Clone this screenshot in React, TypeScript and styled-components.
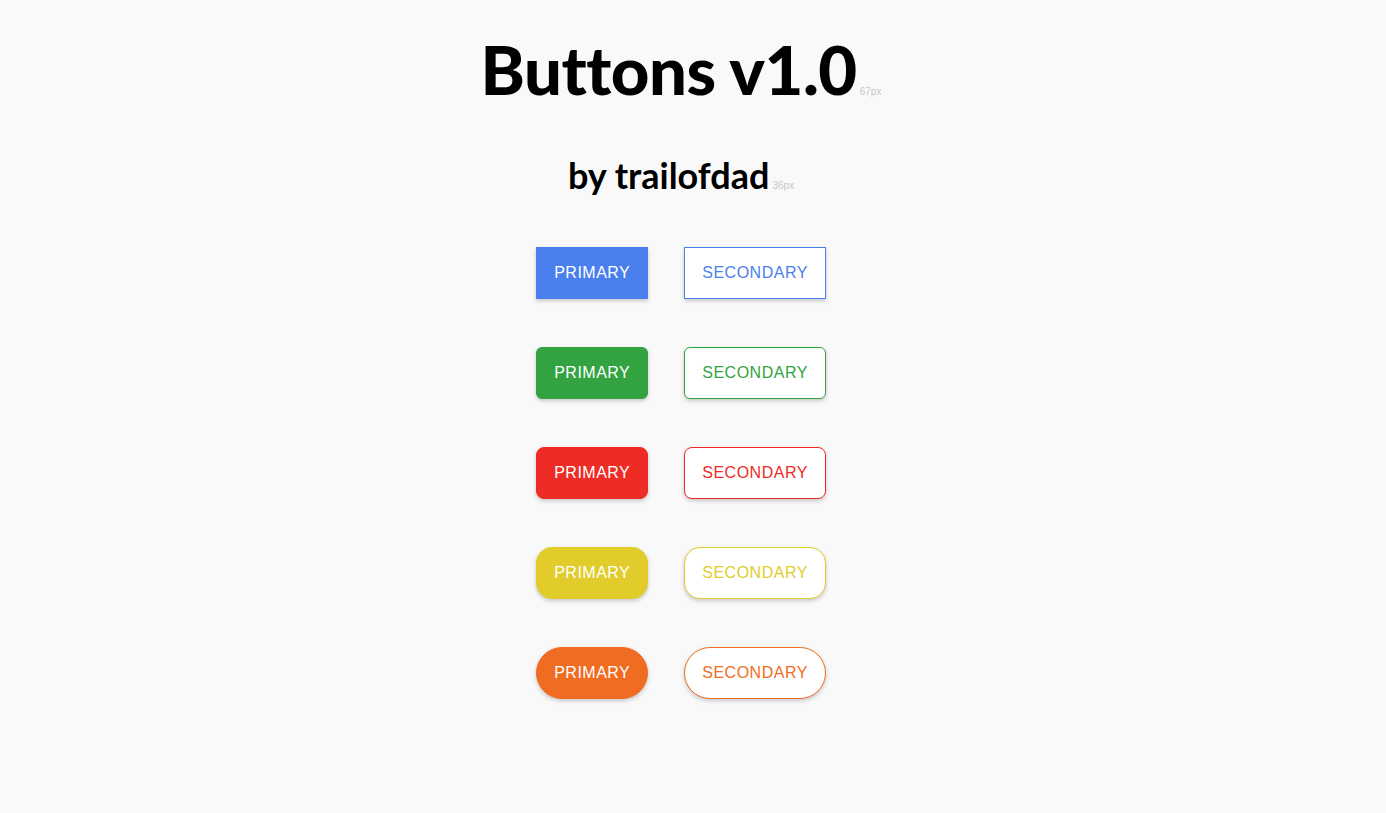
import styled, { createGlobalStyle } from 'styled-components'

const GlobalStyle = createGlobalStyle`
    html, body {
        margin: 0;
        padding: 0;
        background: #f9f9f9;
    }
    body {
        font-family: "Liberation Sans", Arial, sans-serif;
    }
`

const Page = styled.div`
    width: 1362px;
    min-height: 813px;
    display: flex;
    flex-direction: column;
    align-items: center;
`
const Title = styled.h1`
    margin: 29px 0 0;
    font-family: Lato, "Noto Sans", sans-serif;
    font-size: 67px;
    font-weight: 900;
    line-height: 80px;
    letter-spacing: -0.5px;
    color: #000;
    font-variant-ligatures: none;
`
const Subtitle = styled.h2`
    margin: 23px 0 0;
    font-family: Lato, "Noto Sans", sans-serif;
    font-size: 36px;
    font-weight: 700;
    line-height: 40px;
    color: #000;
    font-variant-ligatures: none;
`
const SizeTag = styled.span`
    font-family: "Liberation Sans", sans-serif;
    font-size: 10px;
    font-weight: 400;
    letter-spacing: 0;
    color: #c8c8c8;
    margin-left: 3px;
`
const Grid = styled.div`
    margin-top: 41px;
    display: flex;
    flex-direction: column;
    gap: 48px;
`
const Row = styled.div`
    display: flex;
    gap: 36px;
`
const Button = styled.button<{ $color: string; $radius: number; $outline?: boolean }>`
    height: 52px;
    padding: 0 17px;
    font-family: "Liberation Sans", Arial, sans-serif;
    font-size: 16px;
    letter-spacing: 0.5px;
    text-transform: uppercase;
    border-radius: ${p => p.$radius}px;
    border: 1px solid ${p => p.$color};
    background: ${p => (p.$outline ? '#fff' : p.$color)};
    color: ${p => (p.$outline ? p.$color : '#fff')};
    box-shadow: 0 2px 4px rgba(0, 0, 0, 0.2);
    cursor: pointer;
`

const colors = [
    { c: '#4a80ee', r: 0 },
    { c: '#32a340', r: 6 },
    { c: '#ee2c25', r: 8 },
    { c: '#e2cc2b', r: 16 },
    { c: '#f06c22', r: 26 },
]

export default function App() {
    return (
        <Page>
            <GlobalStyle />
            <Title>
                Buttons v1.0<SizeTag>67px</SizeTag>
            </Title>
            <Subtitle>
                by trailofdad<SizeTag>36px</SizeTag>
            </Subtitle>
            <Grid>
                {colors.map(({ c, r }) => (
                    <Row key={c}>
                        <Button $color={c} $radius={r}>Primary</Button>
                        <Button $color={c} $radius={r} $outline>Secondary</Button>
                    </Row>
                ))}
            </Grid>
        </Page>
    )
}
